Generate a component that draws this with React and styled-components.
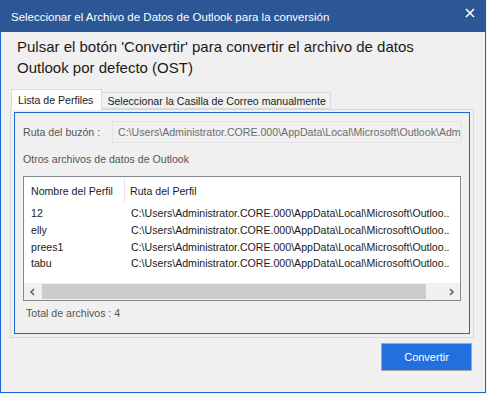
import React from 'react';
import styled, { createGlobalStyle } from 'styled-components';

const GlobalStyle = createGlobalStyle`
  html, body {
    margin: 0;
    padding: 0;
    background: #f0f0f0;
  }

  body {
    font-family: "Liberation Sans", Arial, sans-serif;
    font-size: 10.6px;
    color: #1e1e1e;
  }
`;

const Window = styled.div`
  box-sizing: border-box;
  width: 486px;
  height: 393px;
  display: flex;
  flex-direction: column;
  background: #f0f0f0;
  border: 1px solid #1a68d4;
  border-top: none;
`;

const TitleBar = styled.div`
  height: 30px;
  flex: none;
  display: flex;
  align-items: center;
  justify-content: space-between;
  padding: 2px 10px 0 11px;
  margin: 0 -1px;
  background: #2b5797;
  color: #ffffff;
  font-size: 11.5px;
`;

const CloseButton = styled.button`
  border: none;
  background: transparent;
  padding: 0;
  margin-top: -9px;
  width: 12px;
  height: 12px;
  display: flex;
  align-items: center;
  justify-content: center;
  cursor: pointer;
`;

const Body = styled.div`
  flex: 1;
  display: flex;
  flex-direction: column;
  padding: 4px 11px 0 9px;
`;

const Heading = styled.p`
  margin: 0 0 0 7px;
  font-size: 15px;
  line-height: 21px;
  color: #1a1a1a;
`;

const TabStrip = styled.div`
  display: flex;
  align-items: flex-end;
  margin-top: 11px;
  padding-left: 1px;
  height: 20px;
`;

const Tab = styled.div`
  box-sizing: border-box;
  height: ${({ $active }) => ($active ? '21px' : '17px')};
  padding: ${({ $active }) => ($active ? '0 8px 0 6px' : '0 4px 0 5px')};
  margin-bottom: ${({ $active }) => ($active ? '-1px' : '0')};
  display: flex;
  align-items: center;
  background: ${({ $active }) => ($active ? '#ffffff' : '#f0f0f0')};
  border: 1px solid #d9d9d9;
  border-bottom: ${({ $active }) => ($active ? 'none' : '1px solid #d9d9d9')};
  border-left: ${({ $active }) => ($active ? '1px solid #d9d9d9' : 'none')};
  position: relative;
  z-index: ${({ $active }) => ($active ? 1 : 0)};
  color: #1a1a1a;
  white-space: nowrap;
`;

const TabPanel = styled.div`
  box-sizing: border-box;
  width: 464px;
  height: 229px;
  padding: 2px 3px 3px;
  border: 1px solid #d9d9d9;
  background: #f0f0f0;
`;

const Group = styled.div`
  box-sizing: border-box;
  height: 100%;
  display: flex;
  flex-direction: column;
  padding: 8px 7px 0 8px;
  border: 1px solid #1a68d4;
  color: #555555;
`;

const FieldRow = styled.div`
  display: flex;
  align-items: center;
  height: 22px;
`;

const FieldLabel = styled.span`
  width: 89px;
  flex: none;
`;

const PathBox = styled.div`
  box-sizing: border-box;
  width: 351px;
  height: 22px;
  padding: 0 5px;
  display: flex;
  align-items: center;
  overflow: hidden;
  white-space: nowrap;
  border: 1px solid #e3e3e3;
  background: #f0f0f0;
  color: #6d6d6d;
`;

const Caption = styled.div`
  margin-top: 8px;
  height: 16px;
  line-height: 16px;
`;

const ListView = styled.div`
  box-sizing: border-box;
  width: 438px;
  height: 125px;
  margin-top: 9px;
  display: flex;
  flex-direction: column;
  border: 1px solid #828790;
  background: #ffffff;
  color: #1a1a1a;
  overflow: hidden;
`;

const HeaderRow = styled.div`
  display: flex;
  height: 25px;
  flex: none;
  padding-top: 1px;
`;

const HeaderCell = styled.div`
  box-sizing: border-box;
  width: ${({ $width }) => $width}px;
  flex: none;
  padding-left: ${({ $pad }) => $pad}px;
  display: flex;
  align-items: center;
  border-right: ${({ $divider }) => ($divider ? '1px solid #e5e5e5' : 'none')};
  white-space: nowrap;
`;

const Rows = styled.div`
  flex: 1;
  padding-top: 2px;
`;

const Row = styled.div`
  display: flex;
  height: 16.7px;
  align-items: center;
  white-space: nowrap;
`;

const Cell = styled.div`
  box-sizing: border-box;
  width: ${({ $width }) => $width}px;
  flex: none;
  padding-left: ${({ $pad }) => $pad}px;
  overflow: hidden;
`;

const ScrollBar = styled.div`
  display: flex;
  align-items: center;
  height: 17px;
  flex: none;
  background: #f0f0f0;
`;

const ScrollArrow = styled.div`
  width: 17px;
  height: 17px;
  flex: none;
  display: flex;
  align-items: center;
  justify-content: center;
`;

const ScrollTrack = styled.div`
  flex: 1;
  height: 15px;
  padding: 0 17px 0 1px;
`;

const ScrollThumb = styled.div`
  height: 100%;
  background: #cdcdcd;
`;

const Total = styled.div`
  margin-top: 4px;
  padding-left: 3px;
  height: 16px;
  line-height: 16px;
  color: #555555;
`;

const Footer = styled.div`
  display: flex;
  justify-content: flex-end;
  padding: 5px 2px 0 0;
`;

const ConvertButton = styled.button`
  box-sizing: border-box;
  width: 91px;
  height: 28px;
  border: 1px solid #a6a6a6;
  background: #2270df;
  color: #ffffff;
  font-family: inherit;
  font-size: 11px;
  cursor: pointer;
`;

const PATH = 'C:\\Users\\Administrator.CORE.000\\AppData\\Local\\Microsoft\\Outloo..';

const profiles = ['12', 'elly', 'prees1', 'tabu'];

function Chevron({ dir }) {
  const d = dir === 'left' ? 'M5 1 L2 4 L5 7' : 'M2 1 L5 4 L2 7';
  return (
    <svg width="7" height="8" viewBox="0 0 7 8">
      <path d={d} fill="none" stroke="#606060" strokeWidth="1.6" />
    </svg>
  );
}

export default function App() {
  return (
    <>
      <GlobalStyle />
      <Window>
        <TitleBar>
          <span>Seleccionar el Archivo de Datos de Outlook para la conversión</span>
          <CloseButton aria-label="Cerrar">
            <svg width="10" height="10" viewBox="0 0 10 10">
              <path d="M1 1 L9 9 M9 1 L1 9" stroke="#ffffff" strokeWidth="1.6" />
            </svg>
          </CloseButton>
        </TitleBar>
        <Body>
          <Heading>
            Pulsar el botón 'Convertir' para convertir el archivo de datos
            <br />
            Outlook por defecto (OST)
          </Heading>
          <TabStrip>
            <Tab $active>Lista de Perfiles</Tab>
            <Tab>Seleccionar la Casilla de Correo manualmente</Tab>
          </TabStrip>
          <TabPanel>
            <Group>
              <FieldRow>
                <FieldLabel>Ruta del buzón :</FieldLabel>
                <PathBox>C:\Users\Administrator.CORE.000\AppData\Local\Microsoft\Outlook\Administrator.ost</PathBox>
              </FieldRow>
              <Caption>Otros archivos de datos de Outlook</Caption>
              <ListView>
                <HeaderRow>
                  <HeaderCell $width={101} $pad={7} $divider>Nombre del Perfil</HeaderCell>
                  <HeaderCell $width={337} $pad={5}>Ruta del Perfil</HeaderCell>
                </HeaderRow>
                <Rows>
                  {profiles.map((name) => (
                    <Row key={name}>
                      <Cell $width={101} $pad={7}>{name}</Cell>
                      <Cell $width={337} $pad={6}>{PATH}</Cell>
                    </Row>
                  ))}
                </Rows>
                <ScrollBar>
                  <ScrollArrow><Chevron dir="left" /></ScrollArrow>
                  <ScrollTrack><ScrollThumb /></ScrollTrack>
                  <ScrollArrow><Chevron dir="right" /></ScrollArrow>
                </ScrollBar>
              </ListView>
              <Total>Total de archivos : 4</Total>
            </Group>
          </TabPanel>
          <Footer>
            <ConvertButton>Convertir</ConvertButton>
          </Footer>
        </Body>
      </Window>
    </>
  );
}
